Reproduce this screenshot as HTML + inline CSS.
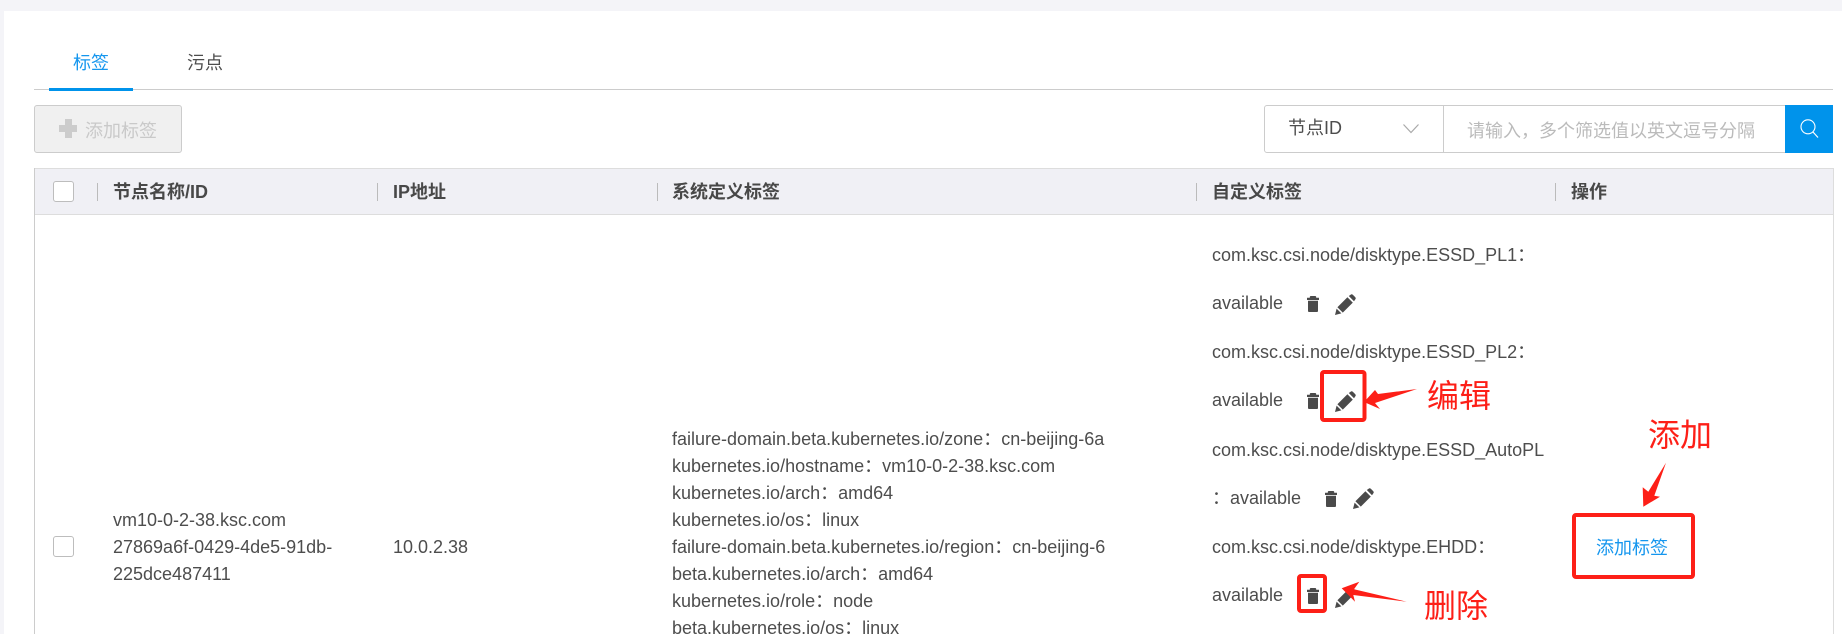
<!DOCTYPE html>
<html lang="zh"><head><meta charset="utf-8"><title>标签</title>
<style>
html,body{margin:0;padding:0;background:#fff}
body{width:1842px;height:634px;position:relative;overflow:hidden;font-family:"Liberation Sans","Noto Sans CJK SC",sans-serif;font-size:18px;color:#4d4d4d}
#w{position:absolute;left:0;top:0;width:1842px;height:634px;background:#fff;filter:blur(.3px)}
.a{position:absolute;white-space:nowrap}
.t{position:absolute;white-space:nowrap;line-height:27px;height:27px}
.h{font-weight:bold;color:#484848;line-height:27px;top:179px}
.s{position:absolute;width:1px;background:#bbb;top:183px;height:18px}
.cb{position:absolute;left:53px;width:19px;height:19px;background:#fff;border:1px solid #bdbdbd;border-radius:3px}
.red{font-size:32px;color:#fd1f17;line-height:40px;font-family:"Noto Sans CJK SC","Liberation Sans",sans-serif;font-weight:400}
svg{position:absolute}
</style></head><body><div id="w">
<div class="a" style="left:0;top:0;width:1842px;height:11px;background:#f4f4f8"></div>
<div class="a" style="left:0;top:0;width:4px;height:634px;background:#f4f4f8"></div>

<div class="a" style="left:73px;top:50px;line-height:27px;color:#1596ee">标签</div>
<div class="a" style="left:187px;top:50px;line-height:27px;color:#4d4d4d">污点</div>
<div class="a" style="left:34px;top:89px;width:1799px;height:1px;background:#ccc"></div>
<div class="a" style="left:49px;top:88px;width:84px;height:3px;background:#0093eb"></div>

<div class="a" style="left:34px;top:105px;width:146px;height:46px;background:#f0f0f0;border:1px solid #ccc;border-radius:3px"></div>
<div class="a" style="left:65px;top:119px;width:7px;height:19px;background:#ccc"></div>
<div class="a" style="left:59px;top:125px;width:18px;height:7px;background:#ccc"></div>
<div class="a" style="left:85px;top:118px;line-height:27px;color:#c9c9c9">添加标签</div>

<div class="a" style="left:1264px;top:105px;width:520px;height:46px;border:1px solid #ccc;border-radius:3px 0 0 3px"></div>
<div class="a" style="left:1443px;top:105px;width:1px;height:48px;background:#ccc"></div>
<div class="a" style="left:1288px;top:115px;line-height:27px;color:#4d4d4d">节点ID</div>
<svg style="left:1402px;top:123px" width="18" height="11" viewBox="0 0 18 11"><path d="M1.5 1.5L9 9.5L16.5 1.5" fill="none" stroke="#aaa" stroke-width="1.2"/></svg>
<div class="a" style="left:1467px;top:118px;line-height:27px;color:#bbb">请输入，多个筛选值以英文逗号分隔</div>
<div class="a" style="left:1785px;top:105px;width:48px;height:48px;background:#0093eb"></div>
<svg style="left:1799px;top:118px" width="21" height="21" viewBox="0 0 21 21"><circle cx="9" cy="8.8" r="7" fill="none" stroke="#fff" stroke-width="1.1"/><path d="M14 14L19 19.5" stroke="#fff" stroke-width="1.2"/></svg>

<div class="a" style="left:34px;top:168px;width:1799px;height:45px;background:#f0f0f5;border-top:1px solid #ddd;border-bottom:1px solid #ddd"></div>
<div class="a" style="left:34px;top:168px;width:1px;height:466px;background:#ccc"></div>
<div class="a" style="left:1833px;top:168px;width:1px;height:466px;background:#ddd"></div>

<div class="cb" style="top:181px"></div>
<div class="s" style="left:97px"></div>
<div class="a h" style="left:113px">节点名称/ID</div>
<div class="s" style="left:377px"></div>
<div class="a h" style="left:393px">IP地址</div>
<div class="s" style="left:657px"></div>
<div class="a h" style="left:672px">系统定义标签</div>
<div class="s" style="left:1196px"></div>
<div class="a h" style="left:1212px">自定义标签</div>
<div class="s" style="left:1555px"></div>
<div class="a h" style="left:1571px">操作</div>

<div class="cb" style="top:536px"></div>
<div class="t" style="left:113px;top:507px">vm10-0-2-38.ksc.com</div>
<div class="t" style="left:113px;top:534px">27869a6f-0429-4de5-91db-</div>
<div class="t" style="left:113px;top:561px">225dce487411</div>
<div class="t" style="left:393px;top:534px">10.0.2.38</div>

<div class="t" style="left:672px;top:426px">failure-domain.beta.kubernetes.io/zone：cn-beijing-6a</div>
<div class="t" style="left:672px;top:453px">kubernetes.io/hostname：vm10-0-2-38.ksc.com</div>
<div class="t" style="left:672px;top:480px">kubernetes.io/arch：amd64</div>
<div class="t" style="left:672px;top:507px">kubernetes.io/os：linux</div>
<div class="t" style="left:672px;top:534px">failure-domain.beta.kubernetes.io/region：cn-beijing-6</div>
<div class="t" style="left:672px;top:561px">beta.kubernetes.io/arch：amd64</div>
<div class="t" style="left:672px;top:588px">kubernetes.io/role：node</div>
<div class="t" style="left:672px;top:615px">beta.kubernetes.io/os：linux</div>

<div class="t" style="left:1212px;top:242px">com.ksc.csi.node/disktype.ESSD_PL1：</div>
<div class="t" style="left:1212px;top:290px">available</div>
<div class="t" style="left:1212px;top:339px">com.ksc.csi.node/disktype.ESSD_PL2：</div>
<div class="t" style="left:1212px;top:387px">available</div>
<div class="t" style="left:1212px;top:437px">com.ksc.csi.node/disktype.ESSD_AutoPL</div>
<div class="t" style="left:1212px;top:485px">：available</div>
<div class="t" style="left:1212px;top:534px">com.ksc.csi.node/disktype.EHDD：</div>
<div class="t" style="left:1212px;top:582px">available</div>

<svg width="0" height="0" style="left:0;top:0"><defs>
<symbol id="tr" viewBox="0 0 12 16"><path d="M2.8 1.7V1Q2.8 0 3.8 0H8.2Q9.2 0 9.2 1V1.7H12V4H0V1.7ZM1 4.7H11V15Q11 16 10 16H2Q1 16 1 15Z" fill="#4a4a4a"/></symbol>
<symbol id="pn" viewBox="0 0 21 21"><path d="M0 21L1.6 14.6L6.4 19.4Z M2.4 13.2L12.4 3.2L17.8 8.6L7.8 18.6Z M13.8 2L15.6 .7Q16.6 -.2 17.8 .7L20.3 3.2Q21.2 4.4 20.3 5.4L19 7.2Z" fill="#4a4a4a"/></symbol>
</defs></svg>
<svg style="left:1307px;top:296px" width="12" height="16"><use href="#tr"/></svg>
<svg style="left:1335px;top:294px" width="21" height="21"><use href="#pn"/></svg>
<svg style="left:1307px;top:393px" width="12" height="16"><use href="#tr"/></svg>
<svg style="left:1335px;top:391px" width="21" height="21"><use href="#pn"/></svg>
<svg style="left:1325px;top:491px" width="12" height="16"><use href="#tr"/></svg>
<svg style="left:1353px;top:488px" width="21" height="21"><use href="#pn"/></svg>
<svg style="left:1307px;top:588px" width="12" height="16"><use href="#tr"/></svg>
<svg style="left:1335px;top:587px" width="21" height="21"><use href="#pn"/></svg>

<div class="a" style="left:1596px;top:535px;line-height:27px;color:#1596ee">添加标签</div>

<svg style="left:0;top:0" width="1842" height="634">
<g fill="none" stroke="#fd1f17" stroke-width="4">
<rect x="1322" y="372" width="42.5" height="48" rx="2"/>
<rect x="1574" y="515" width="119" height="62" rx="2"/>
<rect x="1299" y="576" width="26" height="35" rx="2"/>
</g>
<g fill="#fd1f17">
<path d="M1364 402L1375 390L1378 394L1417 389L1375 403L1380 409Z"/>
<path d="M1666 462.7L1648.3 491.7L1642.7 487.3L1643.3 506.7L1660 496.7L1654.3 495.7Z"/>
<path d="M1341.7 588.3L1359.3 581.7L1354 589.3L1406.7 601.7L1353.3 595L1355 601.7Z"/>
</g>
</svg>
<div class="a red" style="left:1427px;top:374px">编辑</div>
<div class="a red" style="left:1648px;top:413px">添加</div>
<div class="a red" style="left:1424px;top:584px">删除</div>
</div></body></html>
